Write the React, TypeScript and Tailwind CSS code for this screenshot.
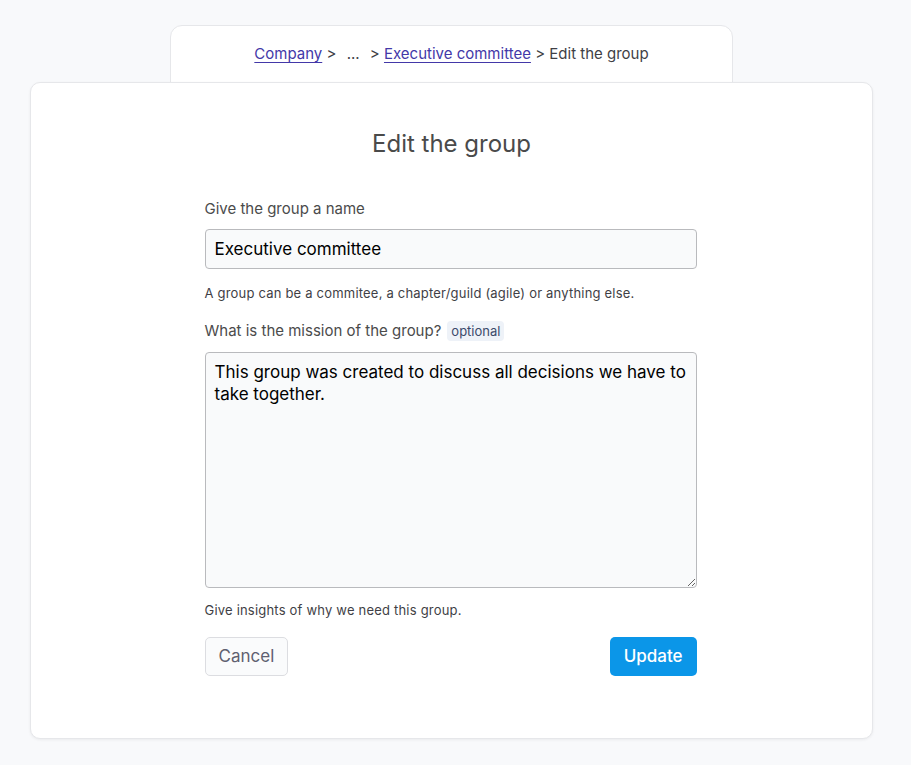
import React from 'react'

const font = { fontFamily: 'Inter, "Noto Sans", sans-serif' }

function Breadcrumb() {
  return (
    <div className="mx-auto -mb-[9px] w-[563px] rounded-t-[12px] border border-[#e6e7ea] bg-white pt-[18px] pb-[26px] text-center text-[15px] leading-[20px] text-[#3f3f46]">
      <a href="#" className="text-[#4338a8] underline underline-offset-[3px] decoration-[#4338a8]">Company</a>
      <span> &gt; </span>
      <span className="mx-[6px]">...</span>
      <span> &gt; </span>
      <a href="#" className="text-[#4338a8] underline underline-offset-[3px] decoration-[#4338a8]">Executive committee</a>
      <span> &gt; Edit the group</span>
    </div>
  )
}

export default function App() {
  return (
    <div style={font} className="min-h-[765px] bg-[#f8f9fb] pt-[25px] pl-[30px] pr-[38px]">
      <Breadcrumb />
      <div className="relative rounded-[10px] border border-[#e6e7ea] bg-white pt-[45px] pb-[62px] shadow-[0_1px_3px_rgba(0,0,0,0.06)]">
        <h1 className="text-center text-[24px] leading-[32px] text-[#4a4a4a]">Edit the group</h1>

        <form className="mx-auto mt-[39px] w-[492px] -translate-x-[1px]">
          <label className="block text-[15px] leading-[20px] text-[#4b4b4b]">Give the group a name</label>
          <input
            defaultValue="Executive committee"
            className="mt-[10px] block h-[40px] w-full rounded-[4px] border border-[#b9babd] bg-[#f9fafb] px-[9px] text-[17px] text-black outline-none"
          />
          <p className="mt-[16px] text-[13px] leading-[16px] tracking-[0.2px] text-[#3f3f46]">
            A group can be a commitee, a chapter/guild (agile) or anything else.
          </p>

          <div className="mt-[20px] flex items-center gap-[6px] text-[15px] leading-[20px] text-[#4b4b4b]">
            <span>What is the mission of the group?</span>
            <span className="rounded-[4px] bg-[#eef2f8] px-[4px] text-[13px] leading-[20px] text-[#3b4a6b]">optional</span>
          </div>
          <textarea
            defaultValue="This group was created to discuss all decisions we have to take together."
            className="mt-[11px] block h-[236px] w-full rounded-[4px] border border-[#b9babd] bg-[#f9fafb] px-[9px] py-[8px] text-[17px] leading-[22px] text-black outline-none"
          />
          <p className="mt-[14px] text-[13px] leading-[16px] tracking-[0.2px] text-[#3f3f46]">Give insights of why we need this group.</p>

          <div className="mt-[19px] flex items-center justify-between">
            <button
              type="button"
              className="h-[39px] rounded-[5px] border border-[#dcdde1] bg-[#fafbfc] px-[13px] text-[17px] text-[#5f6070]"
            >
              Cancel
            </button>
            <button
              type="button"
              className="h-[39px] rounded-[5px] bg-[#0b96e8] px-[14px] text-[17px] font-medium text-white"
            >
              Update
            </button>
          </div>
        </form>
      </div>
    </div>
  )
}
